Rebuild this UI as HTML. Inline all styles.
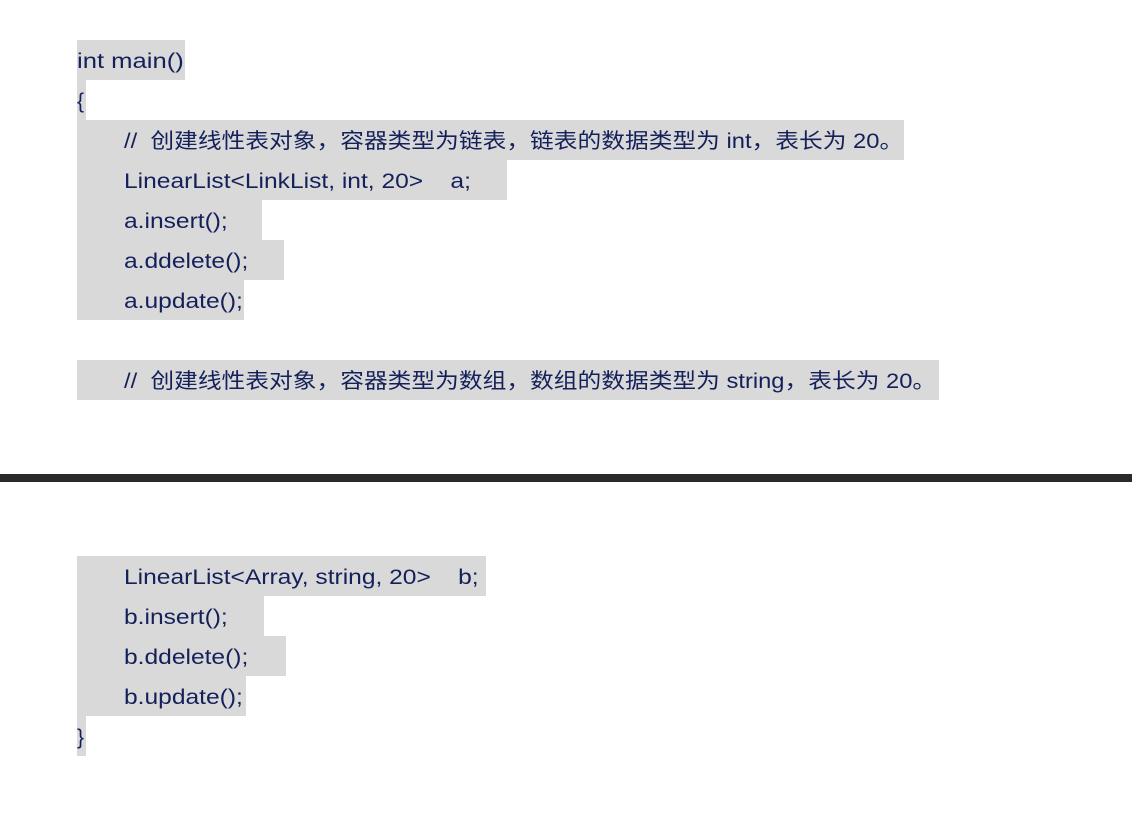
<!DOCTYPE html>
<html><head><meta charset="utf-8"><style>
body{margin:0;width:1132px;height:826px;background:#fff;position:relative;overflow:hidden;font-family:"Liberation Sans","Noto Sans CJK SC",sans-serif;font-size:21px;color:#14205a}
.l{position:absolute;left:77px;height:40px;line-height:44px;background:#d9d9d9;white-space:pre}
.i{padding-left:47px;box-sizing:border-box}
.l span{display:inline-block;transform:scaleX(1.17);transform-origin:0 50%}
.l span.c{transform:scaleX(1.13)}
.bar{position:absolute;left:0;top:474px;width:1132px;height:8px;background:#2a2a2a}
</style></head><body>
<div class="l" style="top:40px;width:108px"><span style="transform:scaleX(1.22)">int main()</span></div>
<div class="l" style="top:80px;width:9px">{</div>
<div class="l i" style="top:120px;width:827px"><span class="c">//  创建线性表对象，容器类型为链表，链表的数据类型为 int，表长为 20。</span></div>
<div class="l i" style="top:160px;width:430px"><span>LinearList&lt;LinkList, int, 20&gt;    a;</span></div>
<div class="l i" style="top:200px;width:185px"><span>a.insert();</span></div>
<div class="l i" style="top:240px;width:207px"><span>a.ddelete();</span></div>
<div class="l i" style="top:280px;width:167px"><span>a.update();</span></div>
<div class="l i" style="top:360px;width:862px"><span class="c">//  创建线性表对象，容器类型为数组，数组的数据类型为 string，表长为 20。</span></div>
<div class="bar"></div>
<div class="l i" style="top:556px;width:409px"><span>LinearList&lt;Array, string, 20&gt;    b;</span></div>
<div class="l i" style="top:596px;width:187px"><span>b.insert();</span></div>
<div class="l i" style="top:636px;width:209px"><span>b.ddelete();</span></div>
<div class="l i" style="top:676px;width:169px"><span>b.update();</span></div>
<div class="l" style="top:716px;width:9px">}</div>
</body></html>
